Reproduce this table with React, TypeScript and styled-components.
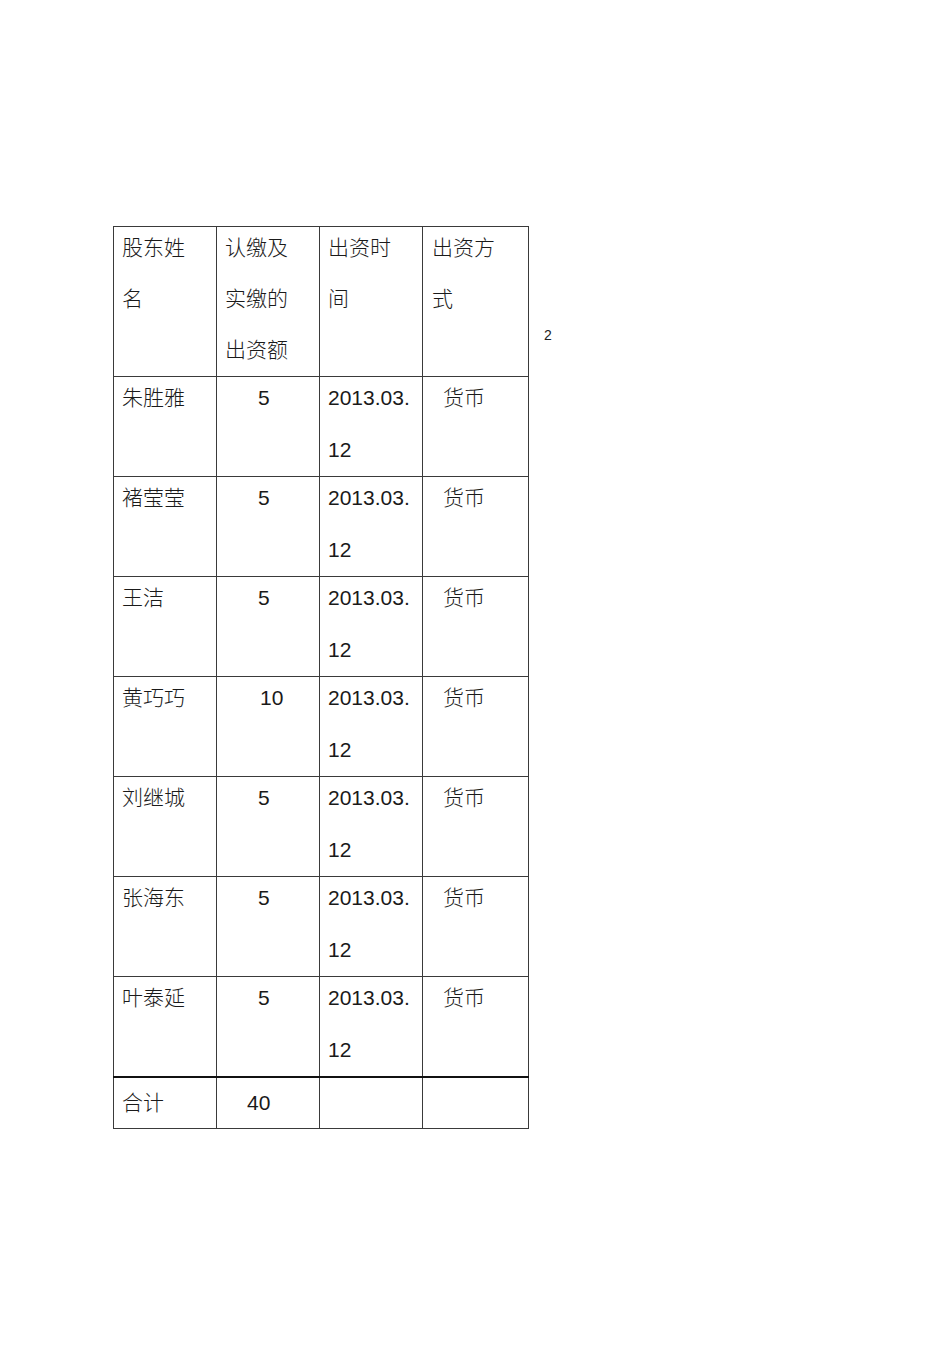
import React from "react";
import styled, { createGlobalStyle } from "styled-components";

const GlobalStyle = createGlobalStyle`
  html, body {
    margin: 0;
    padding: 0;
    background: #ffffff;
  }
  body {
    font-family: "Liberation Sans", "Noto Sans CJK SC", sans-serif;
    color: #1a1a1a;
  }
`;

type Row = { name: string; amount: string; indent: number };

const rows: Row[] = [
  { name: "朱胜雅", amount: "5", indent: 41 },
  { name: "褚莹莹", amount: "5", indent: 41 },
  { name: "王洁", amount: "5", indent: 41 },
  { name: "黄巧巧", amount: "10", indent: 43 },
  { name: "刘继城", amount: "5", indent: 41 },
  { name: "张海东", amount: "5", indent: 41 },
  { name: "叶泰延", amount: "5", indent: 41 },
];

export default function App() {
  return (
    <>
      <GlobalStyle />
      <Page>
        <Table>
          <colgroup>
            <col style={{ width: 103 }} />
            <col style={{ width: 103 }} />
            <col style={{ width: 103 }} />
            <col style={{ width: 106 }} />
          </colgroup>
          <tbody>
            <HeaderRow>
              <Cell>
                <Lines>股东姓<br />名</Lines>
              </Cell>
              <Cell>
                <Lines>认缴及<br />实缴的<br />出资额</Lines>
              </Cell>
              <Cell>
                <Lines>出资时<br />间</Lines>
              </Cell>
              <Cell $indent={9}>
                <Lines>出资方<br />式</Lines>
              </Cell>
            </HeaderRow>
            {rows.map((r) => (
              <DataRow key={r.name}>
                <Cell>
                  <Lines $tall>{r.name}</Lines>
                </Cell>
                <Cell $indent={r.indent}>
                  <Lines $tall>{r.amount}</Lines>
                </Cell>
                <Cell>
                  <Lines $tall>2013.03.<br />12</Lines>
                </Cell>
                <Cell $indent={20}>
                  <Lines $tall>货币</Lines>
                </Cell>
              </DataRow>
            ))}
            <TotalRow>
              <Cell>
                <TotalText>合计</TotalText>
              </Cell>
              <Cell $indent={30}>
                <TotalText>40</TotalText>
              </Cell>
              <Cell />
              <Cell />
            </TotalRow>
          </tbody>
        </Table>
        <PageNo>2</PageNo>
      </Page>
    </>
  );
}

const Page = styled.div`
  display: flex;
  align-items: flex-start;
  padding: 226px 0 0 113px;
  min-height: 1345px;
  box-sizing: border-box;
`;

const Table = styled.table`
  border-collapse: collapse;
  table-layout: fixed;
  width: 415px;
  font-size: 21px;
  font-weight: 300;
`;

const HeaderRow = styled.tr`
  height: 150px;
`;

const DataRow = styled.tr`
  height: 100px;
`;

const TotalRow = styled.tr`
  height: 49px;
  td {
    border-top: 2px solid #111111;
  }
`;

const Cell = styled.td<{ $indent?: number }>`
  border: 1px solid #3a3a3a;
  vertical-align: top;
  padding: 0 4px 0 ${(p) => p.$indent ?? 8}px;
  overflow: hidden;
`;

const Lines = styled.div<{ $tall?: boolean }>`
  line-height: ${(p) => (p.$tall ? 52 : 51)}px;
  margin-top: -5px;
  white-space: nowrap;
`;

const TotalText = styled.div`
  line-height: 50px;
  white-space: nowrap;
`;

const PageNo = styled.div`
  margin: 102px 0 0 15px;
  font-size: 14px;
  line-height: 14px;
  color: #222222;
`;
